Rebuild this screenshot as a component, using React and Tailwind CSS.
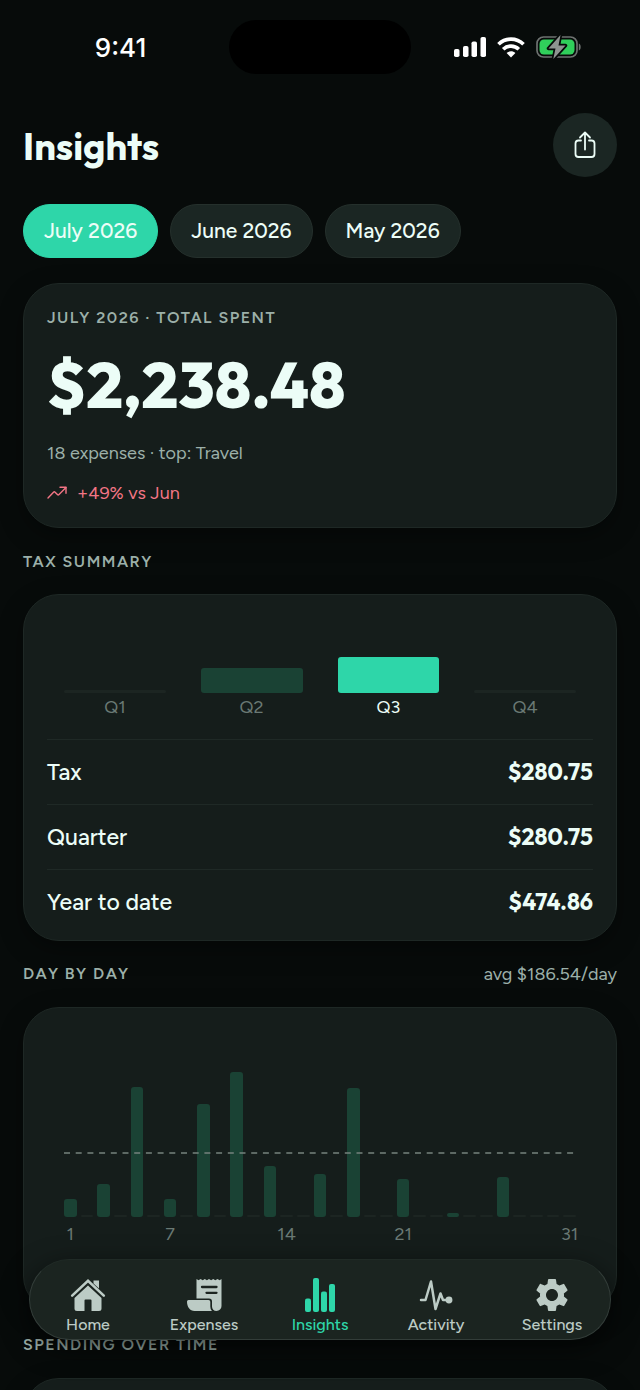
import { useState } from 'react'
import clsx from 'clsx'

// ── Data ──────────────────────────────────────────────────────
const MONTHS = ['July 2026', 'June 2026', 'May 2026']

const QUARTERS = [
  { name: 'Q1', height: 3 },
  { name: 'Q2', height: 25 },
  { name: 'Q3', height: 36, current: true },
  { name: 'Q4', height: 3 },
]

const TAX_ROWS = [
  { label: 'Tax', value: '$280.75' },
  { label: 'Quarter', value: '$280.75' },
  { label: 'Year to date', value: '$474.86' },
]

// bar height per day that has any spending
const SPENT = { 1: 18, 3: 33, 5: 130, 7: 18, 9: 113, 11: 145, 13: 51, 16: 43, 18: 129, 21: 38, 24: 4, 27: 40 }
const DAYS = Array.from({ length: 31 }, (_, i) => i + 1)
const TICKS = [1, 7, 14, 21, 31]

// ── Icons ─────────────────────────────────────────────────────
function SignalIcon() {
  return (
    <svg width="32" height="20" viewBox="0 0 32 20" fill="#fff" aria-hidden="true">
      <rect x="0" y="12" width="5.5" height="8" rx="1.8" />
      <rect x="9" y="9" width="5.5" height="11" rx="1.8" />
      <rect x="17.5" y="4.5" width="5.5" height="15.5" rx="1.8" />
      <rect x="26.5" y="0" width="5.5" height="20" rx="1.8" />
    </svg>
  )
}

function WifiIcon() {
  return (
    <svg width="28" height="21" viewBox="0 0 28 21" fill="none" stroke="#fff" strokeWidth="3.7" aria-hidden="true">
      <path d="M1.5 7.3C8.5 .4 19.5 .4 26.5 7.3" />
      <path d="M6.2 12.2C10.5 8 17.5 8 21.8 12.2" />
      <path d="M14 20.5 9.6 16C12 13.8 16 13.8 18.4 16Z" fill="#fff" stroke="none" />
    </svg>
  )
}

function BatteryIcon() {
  return (
    <svg width="46" height="24" viewBox="0 0 46 24" fill="none" aria-hidden="true">
      <rect x="1" y="2" width="40" height="20" rx="6.5" stroke="#6d7270" strokeWidth="1.7" />
      <path d="M42.8 8.5c2.5.7 2.5 6.3 0 7Z" fill="#6d7270" />
      <rect x="3.5" y="4.5" width="35" height="15" rx="4.5" fill="#30cf5b" />
      <path d="M24.5 0 12.5 13.5h7L17.3 24 29.5 10.5h-7Z" fill="#8e9491" stroke="#070b0a" strokeWidth="3.5" paintOrder="stroke" strokeLinejoin="round" />
    </svg>
  )
}

function ShareIcon() {
  return (
    <svg width="22" height="28" viewBox="0 0 22 28" fill="none" stroke="currentColor" strokeWidth="1.8" strokeLinecap="round" strokeLinejoin="round" aria-hidden="true">
      <path d="M11 18.5V2M6 6.5 11 1.5l5 5" />
      <path d="M7 9.5H4.5a3 3 0 0 0-3 3V23a3 3 0 0 0 3 3h13a3 3 0 0 0 3-3V12.5a3 3 0 0 0-3-3H15" />
    </svg>
  )
}

function TrendIcon() {
  return (
    <svg width="20" height="14" viewBox="0 0 20 14" fill="none" stroke="currentColor" strokeWidth="1.4" strokeLinecap="round" strokeLinejoin="round" aria-hidden="true">
      <path d="M1 12 6.5 6.2q.8-.8 1.6 0l2.3 2.3q.8.8 1.6 0L19 1.5" />
      <path d="M13 1.3h6v6" />
    </svg>
  )
}

function HomeIcon() {
  return (
    <svg width="36" height="36" viewBox="0 0 36 36" fill="currentColor" aria-hidden="true">
      <path d="M2.2 18.6 18 3.8l15.8 14.8" fill="none" stroke="currentColor" strokeWidth="2.6" strokeLinecap="round" />
      <path d="M23.5 3.5H29v8l-5.5-5Z" />
      <path d="M18 8.5 4.5 21v10.5A2.500 2.500 0 0 0 7 34h7.5V23.500q0-1 1-1h5q1 0 1 1V34H29a2.500 2.500 0 0 0 2.500-2.500V21Z" />
    </svg>
  )
}

function ExpensesIcon() {
  return (
    <svg width="36" height="36" viewBox="0 0 36 36" fill="currentColor" aria-hidden="true">
      <path d="M10.5 2l2 1.300 2.100-1.300 2.100 1.300L18.800 2l2.100 1.300L23 2l2.100 1.300L27.200 2l2.100 1.300L31.500 2l2.100 1.300L35.500 2v27a5 5 0 0 1-5 5c-2.700 0-4.500-2-4.500-4.500v-5a3 3 0 0 0-3-3H10.500Z" />
      <path d="M2.500 23h20q1.800 0 1.800 1.800v4.700q0 2.700 1.600 4.500H8.500C4 34 1 30 1 24.500Q1 23 2.500 23Z" />
      <path d="M16 10h14.500M20.500 15.800h10" stroke="#1b2420" strokeWidth="2.300" strokeLinecap="round" />
    </svg>
  )
}

function InsightsIcon() {
  return (
    <svg width="36" height="36" viewBox="0 0 36 36" fill="currentColor" aria-hidden="true">
      <rect x="3" y="21.5" width="6" height="13.5" rx="2" />
      <rect x="11" y="1" width="6" height="34" rx="2" />
      <rect x="19" y="14.5" width="6" height="20.5" rx="2" />
      <rect x="27" y="7" width="6" height="28" rx="2" />
    </svg>
  )
}

function ActivityIcon() {
  return (
    <svg width="36" height="36" viewBox="0 0 36 36" fill="none" stroke="currentColor" strokeWidth="2.5" strokeLinecap="round" strokeLinejoin="round" aria-hidden="true">
      <path d="M3 23h4.500L13 4.500 17.500 32 22.500 16.500l2.500 6.500h5" />
      <circle cx="31" cy="23" r="2.2" fill="currentColor" />
    </svg>
  )
}

function SettingsIcon() {
  return (
    <svg width="40" height="40" viewBox="0 0 24 24" className="shrink-0" fill="currentColor" aria-hidden="true">
      <path d="M19.14 12.94c.04-.3.06-.61.06-.94 0-.32-.02-.64-.07-.94l2.03-1.58a.49.49 0 0 0 .12-.61l-1.92-3.32a.488.488 0 0 0-.59-.22l-2.39.96c-.5-.38-1.03-.7-1.62-.94l-.36-2.54a.484.484 0 0 0-.48-.41h-3.84c-.24 0-.43.17-.47.41l-.36 2.54c-.59.24-1.13.57-1.62.94l-2.39-.96c-.22-.08-.47 0-.59.22L2.74 8.87c-.12.21-.08.47.12.61l2.03 1.58c-.05.3-.09.63-.09.94s.02.64.07.94l-2.03 1.58a.49.49 0 0 0-.12.61l1.92 3.32c.12.22.37.29.59.22l2.39-.96c.5.38 1.03.7 1.62.94l.36 2.54c.05.24.24.41.48.41h3.84c.24 0 .44-.17.47-.41l.36-2.54c.59-.24 1.13-.56 1.62-.94l2.39.96c.22.08.47 0 .59-.22l1.92-3.32c.12-.22.07-.47-.12-.61l-2.01-1.58zM12 15.6c-1.98 0-3.6-1.62-3.6-3.6s1.62-3.6 3.6-3.6 3.6 1.62 3.6 3.6-1.62 3.6-3.6 3.6z" />
    </svg>
  )
}

const TABS = [
  { name: 'Home', Icon: HomeIcon },
  { name: 'Expenses', Icon: ExpensesIcon },
  { name: 'Insights', Icon: InsightsIcon },
  { name: 'Activity', Icon: ActivityIcon },
  { name: 'Settings', Icon: SettingsIcon },
]

// ── Pieces ────────────────────────────────────────────────────
function StatusBar() {
  return (
    <div className="grid grid-cols-[1fr_182px_1fr] items-center h-[94px] shrink-0">
      <div className="pl-3 text-center text-[26px] font-medium text-white font-['Inter',sans-serif]">9:41</div>
      <div className="h-[54px] rounded-full bg-black" />
      <div className="flex items-center justify-center gap-[11px] pr-4">
        <SignalIcon />
        <WifiIcon />
        <BatteryIcon />
      </div>
    </div>
  )
}

function Card({ className, children }) {
  return (
    <section className={clsx('rounded-[36px] border border-[#1e2825] bg-[#151d1b] p-[22px] shadow-[0_8px_24px_rgba(0,0,0,0.35)]', className)}>
      {children}
    </section>
  )
}

function SectionHeader({ title, note }) {
  return (
    <div className="flex items-center justify-between h-[66px] pt-px">
      <h2 className="text-base font-semibold tracking-[1.5px] uppercase text-[#9cb0a9]">{title}</h2>
      {note && <span className="text-lg text-[#9cb0a9]">{note}</span>}
    </div>
  )
}

function QuarterChart() {
  return (
    <div className="flex items-end gap-[35px] px-[18px] pb-4 h-[120px]">
      {QUARTERS.map((q) => (
        <div key={q.name} className="flex-1">
          <div
            className={clsx(
              q.current ? 'bg-[#2ed6a9] rounded-[3px]' : q.height > 3 ? 'bg-[#1a4234] rounded-[3px]' : 'bg-[#1c2522] rounded-full',
            )}
            style={{ height: q.height }}
          />
          <div className={clsx('text-center text-lg leading-7', q.current ? 'text-[#ecfdf7]' : 'text-[#6a7974]')}>
            {q.name}
          </div>
        </div>
      ))}
    </div>
  )
}

function DayChart() {
  return (
    <div className="px-[18px]">
      <div className="relative flex items-end gap-1 h-[187px]">
        {DAYS.map((d) => (
          <div
            key={d}
            className={clsx('flex-1', SPENT[d] ? 'bg-[#1a4234] rounded-[3px]' : 'bg-[#1c2522] rounded-full')}
            style={{ height: SPENT[d] ?? 2 }}
          />
        ))}
        {/* average line */}
        <svg className="absolute bottom-[63px] left-0 w-full h-[2px]" aria-hidden="true">
          <line x1="0" x2="100%" y1="1" y2="1" stroke="#75827d" strokeWidth="1.5" strokeDasharray="6 5.7" />
        </svg>
      </div>
      <div className="flex gap-1 h-[34px] text-lg leading-[34px] text-[#6a7974]">
        {DAYS.map((d) => (
          <div key={d} className="flex flex-1 basis-0 min-w-0 justify-center">
            {TICKS.includes(d) && <span>{d}</span>}
          </div>
        ))}
      </div>
    </div>
  )
}

function TabBar({ active, onChange }) {
  return (
    <nav className="absolute inset-x-[29px] bottom-[50px] flex h-[81px] rounded-full border border-[#333d39] border-t-[#202a26] bg-[#1b2420] shadow-[0_8px_28px_rgba(0,0,0,0.6)]">
      {TABS.map(({ name, Icon }) => (
        <button
          key={name}
          onClick={() => onChange(name)}
          className={clsx(
            'flex flex-1 basis-0 flex-col items-center justify-end pb-0.5 cursor-pointer',
            active === name ? 'text-[#2ed6a9]' : 'text-[#bccbc5]',
          )}
        >
          <span className="flex items-center justify-center size-9">
            <Icon />
          </span>
          <span className="text-base leading-6 font-medium">{name}</span>
        </button>
      ))}
    </nav>
  )
}

// ── Screen ────────────────────────────────────────────────────
export default function App() {
  const [month, setMonth] = useState('July 2026')
  const [tab, setTab] = useState('Insights')

  return (
    <div className="relative h-screen overflow-hidden bg-[#070b0a] text-[#ecfdf7] font-['Figtree','Lato',sans-serif]">
      <div className="h-full overflow-y-auto [scrollbar-width:none]">
        <StatusBar />

        <main className="px-[23px] pb-36">
          <header className="flex items-center justify-between pt-[19px] pb-[27px]">
            <h1 className="pt-0.5 text-[38px] leading-[48px] font-bold font-['Outfit','Figtree','Lato',sans-serif]">Insights</h1>
            <button aria-label="Share" className="flex items-center justify-center size-16 rounded-full bg-[#1b2623] cursor-pointer">
              <ShareIcon />
            </button>
          </header>

          {/* Month filter */}
          <div className="flex gap-3 mb-[25px]">
            {MONTHS.map((m) => (
              <button
                key={m}
                onClick={() => setMonth(m)}
                aria-pressed={month === m}
                className={clsx(
                  'h-[54px] px-5 rounded-full border text-[21px] font-medium whitespace-nowrap cursor-pointer',
                  month === m ? 'bg-[#2ed6a9] border-[#2ed6a9]' : 'bg-[#1b2623] border-[#25302c]',
                )}
              >
                {m}
              </button>
            ))}
          </div>

          <Card>
            <div className="px-px">
              <div className="pt-px text-base leading-[22px] font-semibold tracking-[1.5px] uppercase text-[#9cb0a9]">
                July 2026 · Total spent
              </div>
              <div className="mt-5 text-[64px] leading-[72px] font-extrabold font-['Outfit','Figtree','Lato',sans-serif]">$2,238.48</div>
              <div className="mt-5 text-lg leading-6 text-[#9cb0a9]">18 expenses · top: Travel</div>
              <div className="flex items-center gap-2.5 mt-4 text-lg leading-6 text-[#f37585]">
                <TrendIcon /> +49% vs Jun
              </div>
            </div>
          </Card>

          <SectionHeader title="Tax summary" />
          <Card className="pb-[5px]">
            <QuarterChart />
            <div className="px-px pt-0.5">
              <table className="w-full text-[23px]">
                <tbody>
                  {TAX_ROWS.map((r) => (
                    <tr key={r.label} className="h-[65px] border-t border-[#1f2926]">
                      <th scope="row" className="text-left font-medium">{r.label}</th>
                      <td className="text-right font-bold font-['Outfit','Figtree','Lato',sans-serif]">{r.value}</td>
                    </tr>
                  ))}
                </tbody>
              </table>
            </div>
          </Card>

          <SectionHeader title="Day by day" note="avg $186.54/day" />
          <Card className="pb-[60px]">
            <DayChart />
          </Card>

          <SectionHeader title="Spending over time" />
          <Card className="h-72" />
        </main>
      </div>

      <TabBar active={tab} onChange={setTab} />
    </div>
  )
}
